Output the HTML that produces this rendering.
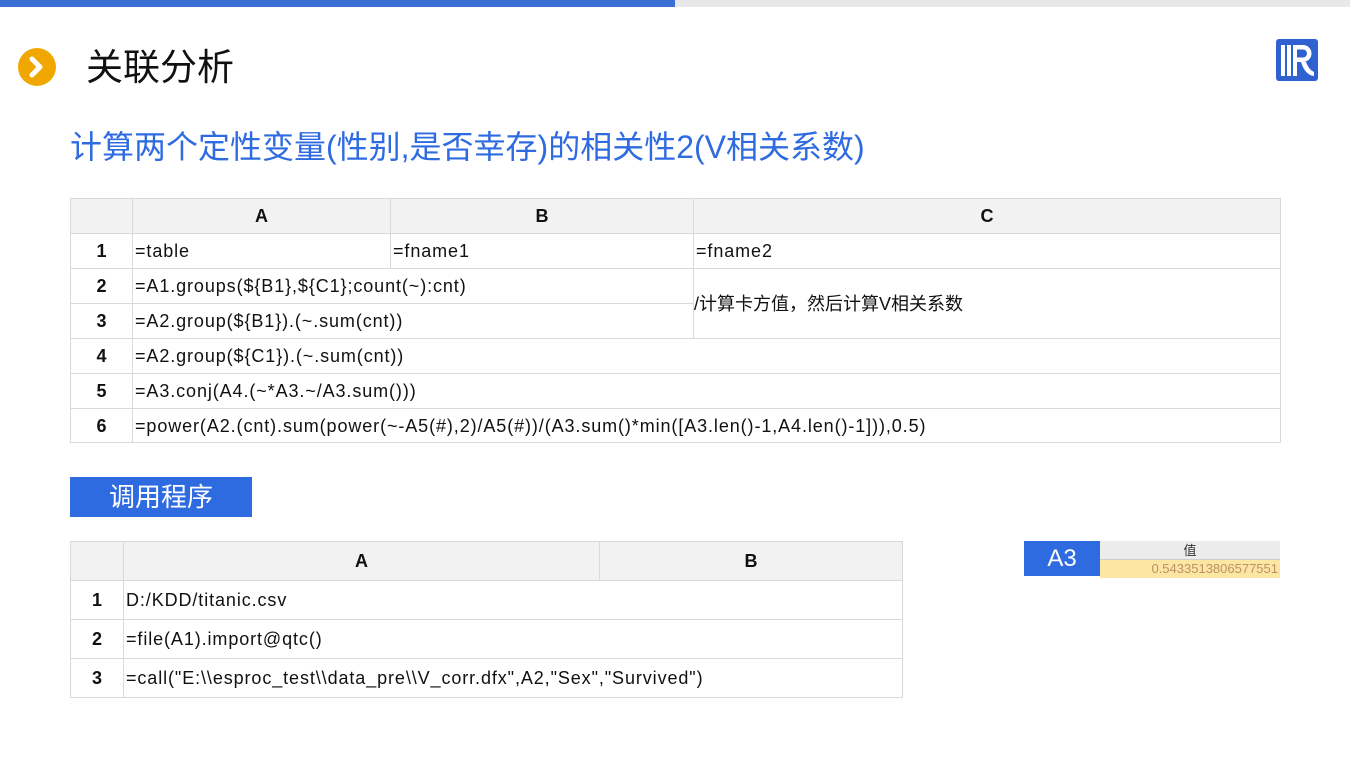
<!DOCTYPE html>
<html><head><meta charset="utf-8"><style>
*{margin:0;padding:0;box-sizing:border-box}
body{width:1350px;height:759px;background:#fff;position:relative;overflow:hidden;font-family:"Liberation Sans","Noto Sans CJK SC",sans-serif}
.a{position:absolute}
.c{position:absolute;border:1px solid #d9d9d9;font-size:18px;color:#111;display:flex;align-items:center;padding-left:2px;white-space:nowrap;background:#fff;line-height:1;letter-spacing:0.9px}
.h{background:#f2f2f2;justify-content:center;font-weight:bold;padding:0;letter-spacing:0}
.n{justify-content:center;font-weight:bold;padding:0;letter-spacing:0}
</style></head><body>
<div class="a" style="left:0;top:0;width:675px;height:7px;background:#3b6fd6"></div>
<div class="a" style="left:675px;top:0;width:675px;height:7px;background:#e8e8e8"></div>
<svg class="a" style="left:18px;top:48px" width="38" height="38"><circle cx="19" cy="19" r="19" fill="#f0a800"/><path d="M14 11 L22 19 L14 27" stroke="#fff" stroke-width="5" fill="none" stroke-linecap="round" stroke-linejoin="round"/></svg>
<div class="a" style="left:86px;top:42px;font-size:37px;line-height:1.2;color:#111;font-family:'Noto Sans CJK SC',sans-serif">关联分析</div>
<svg class="a" style="left:1276px;top:39px" width="42" height="42"><rect width="42" height="42" rx="3" fill="#2f62d0"/><rect x="5" y="6" width="4" height="31" fill="#fff"/><rect x="11" y="6" width="4" height="31" fill="#fff"/><path d="M17 6 H27 a8.5 8.5 0 0 1 0 17 H21 V37 H17 Z M21 10.5 V18.5 H27 a4 4 0 0 0 0-8 Z" fill="#fff"/><path d="M25 23 L30 23 Q33 31 38 33 L38 37 Q29 36 25 23 Z" fill="#fff"/></svg>
<div class="a" style="left:70px;top:128px;font-size:32px;line-height:1.2;color:#2f6be0">计算两个定性变量(性别,是否幸存)的相关性2(V相关系数)</div>

<div class="c h" style="left:70px;top:198px;width:63px;height:36px"></div>
<div class="c h" style="left:132px;top:198px;width:259px;height:36px">A</div>
<div class="c h" style="left:390px;top:198px;width:304px;height:36px">B</div>
<div class="c h" style="left:693px;top:198px;width:588px;height:36px">C</div>
<div class="c n" style="left:70px;top:233px;width:63px;height:36px">1</div>
<div class="c" style="left:132px;top:233px;width:259px;height:36px">=table</div>
<div class="c" style="left:390px;top:233px;width:304px;height:36px">=fname1</div>
<div class="c" style="left:693px;top:233px;width:588px;height:36px">=fname2</div>
<div class="c n" style="left:70px;top:268px;width:63px;height:36px">2</div>
<div class="c" style="left:132px;top:268px;width:562px;height:36px">=A1.groups(${B1},${C1};count(~):cnt)</div>
<div class="c n" style="left:70px;top:303px;width:63px;height:36px">3</div>
<div class="c" style="left:132px;top:303px;width:562px;height:36px">=A2.group(${B1}).(~.sum(cnt))</div>
<div class="c" style="left:693px;top:268px;width:588px;height:71px;padding-left:0;letter-spacing:0">/计算卡方值，然后计算V相关系数</div>
<div class="c n" style="left:70px;top:338px;width:63px;height:36px">4</div>
<div class="c" style="left:132px;top:338px;width:1149px;height:36px">=A2.group(${C1}).(~.sum(cnt))</div>
<div class="c n" style="left:70px;top:373px;width:63px;height:36px">5</div>
<div class="c" style="left:132px;top:373px;width:1149px;height:36px">=A3.conj(A4.(~*A3.~/A3.sum()))</div>
<div class="c n" style="left:70px;top:408px;width:63px;height:35px">6</div>
<div class="c" style="left:132px;top:408px;width:1149px;height:35px">=power(A2.(cnt).sum(power(~-A5(#),2)/A5(#))/(A3.sum()*min([A3.len()-1,A4.len()-1])),0.5)</div>

<div class="a" style="left:70px;top:477px;width:182px;height:40px;background:#2f6be0;color:#fff;font-size:26px;text-align:center;line-height:40px">调用程序</div>

<div class="c h" style="left:70px;top:541px;width:54px;height:40px"></div>
<div class="c h" style="left:123px;top:541px;width:477px;height:40px">A</div>
<div class="c h" style="left:599px;top:541px;width:304px;height:40px">B</div>
<div class="c n" style="left:70px;top:580px;width:54px;height:40px">1</div>
<div class="c" style="left:123px;top:580px;width:780px;height:40px">D:/KDD/titanic.csv</div>
<div class="c n" style="left:70px;top:619px;width:54px;height:40px">2</div>
<div class="c" style="left:123px;top:619px;width:780px;height:40px">=file(A1).import@qtc()</div>
<div class="c n" style="left:70px;top:658px;width:54px;height:40px">3</div>
<div class="c" style="left:123px;top:658px;width:780px;height:40px">=call("E:\\esproc_test\\data_pre\\V_corr.dfx",A2,"Sex","Survived")</div>

<div class="a" style="left:1024px;top:541px;width:76px;height:35px;background:#2f6be0;color:#fff;font-size:24px;text-align:center;line-height:35px">A3</div>
<div class="a" style="left:1100px;top:541px;width:180px;height:19px;background:#ececec;border-bottom:1px solid #ccc;font-size:13px;color:#333;text-align:center;line-height:19px">值</div>
<div class="a" style="left:1100px;top:560px;width:180px;height:18px;background:#fbe6a2;font-size:13px;color:#c0906a;text-align:right;line-height:18px;padding-right:2px">0.5433513806577551</div>
</body></html>
